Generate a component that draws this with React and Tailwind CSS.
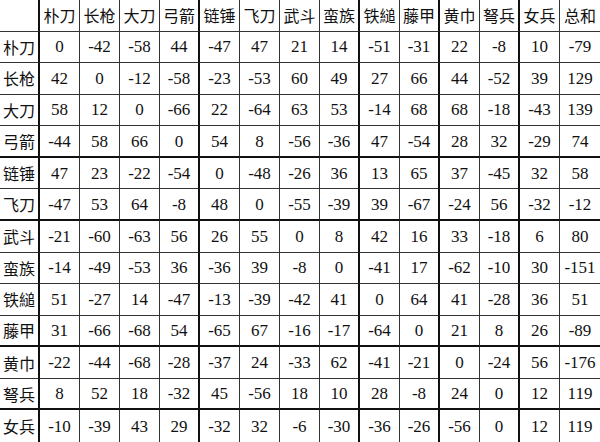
import React from 'react';

const units = ['朴刀', '长枪', '大刀', '弓箭', '链锤', '飞刀', '武斗', '蛮族', '铁縋', '藤甲', '黄巾', '弩兵', '女兵'];

const rows = [
  [0, -42, -58, 44, -47, 47, 21, 14, -51, -31, 22, -8, 10, -79],
  [42, 0, -12, -58, -23, -53, 60, 49, 27, 66, 44, -52, 39, 129],
  [58, 12, 0, -66, 22, -64, 63, 53, -14, 68, 68, -18, -43, 139],
  [-44, 58, 66, 0, 54, 8, -56, -36, 47, -54, 28, 32, -29, 74],
  [47, 23, -22, -54, 0, -48, -26, 36, 13, 65, 37, -45, 32, 58],
  [-47, 53, 64, -8, 48, 0, -55, -39, 39, -67, -24, 56, -32, -12],
  [-21, -60, -63, 56, 26, 55, 0, 8, 42, 16, 33, -18, 6, 80],
  [-14, -49, -53, 36, -36, 39, -8, 0, -41, 17, -62, -10, 30, -151],
  [51, -27, 14, -47, -13, -39, -42, 41, 0, 64, 41, -28, 36, 51],
  [31, -66, -68, 54, -65, 67, -16, -17, -64, 0, 21, 8, 26, -89],
  [-22, -44, -68, -28, -37, 24, -33, 62, -41, -21, 0, -24, 56, -176],
  [8, 52, 18, -32, 45, -56, 18, 10, 28, -8, 24, 0, 12, 119],
  [-10, -39, 43, 29, -32, 32, -6, -30, -36, -26, -56, 0, 12, 119],
];

// lines drawn a bit heavier in the scan
const thickCols = [0, 4, 8, 10, 12];
const thickRows = [4, 6, 10, 12];

function Cell({ r, c, children, isText }) {
  const lastCol = c === 14;
  const lastRow = r === 13;
  const cls = [
    'flex items-center justify-center text-[#111] leading-none',
    isText
      ? "text-[16px] font-['Noto_Sans_CJK_SC','Noto_Sans',sans-serif]"
      : "text-[17px] font-['Liberation_Serif','DejaVu_Serif',serif]",
    lastCol ? '' : thickCols.includes(c) ? 'border-r-2 border-r-[#111]' : 'border-r border-r-[#333]',
    lastRow ? '' : thickRows.includes(r) ? 'border-b-2 border-b-[#111]' : 'border-b border-b-[#333]',
  ].join(' ');
  return <div className={cls}>{children}</div>;
}

export default function App() {
  return (
    <div className="w-[600px] h-[442px] bg-white overflow-hidden">
      <div className="grid grid-cols-15 grid-rows-14 w-[600px] h-[442px]">
        <Cell r={0} c={0} isText />
        {units.map((u, i) => (
          <Cell key={u} r={0} c={i + 1} isText>{u}</Cell>
        ))}
        <Cell r={0} c={14} isText>总和</Cell>
        {rows.map((row, ri) => (
          <React.Fragment key={ri}>
            <Cell r={ri + 1} c={0} isText>{units[ri]}</Cell>
            {row.map((v, ci) => (
              <Cell key={ci} r={ri + 1} c={ci + 1}>{String(v)}</Cell>
            ))}
          </React.Fragment>
        ))}
      </div>
    </div>
  );
}
